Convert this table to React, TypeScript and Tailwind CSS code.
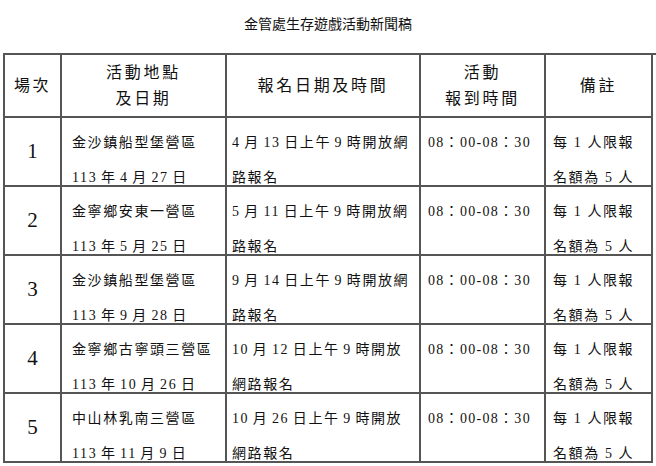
import React from 'react';

const rows = [
  {
    no: '1',
    place: ['金沙鎮船型堡營區', '113 年 4 月 27 日'],
    signup: ['4 月 13 日上午 9 時開放網', '路報名'],
  },
  {
    no: '2',
    place: ['金寧鄉安東一營區', '113 年 5 月 25 日'],
    signup: ['5 月 11 日上午 9 時開放網', '路報名'],
  },
  {
    no: '3',
    place: ['金沙鎮船型堡營區', '113 年 9 月 28 日'],
    signup: ['9 月 14 日上午 9 時開放網', '路報名'],
  },
  {
    no: '4',
    place: ['金寧鄉古寧頭三營區', '113 年 10 月 26 日'],
    signup: ['10 月 12 日上午 9 時開放', '網路報名'],
  },
  {
    no: '5',
    place: ['中山林乳南三營區', '113 年 11 月 9 日'],
    signup: ['10 月 26 日上午 9 時開放', '網路報名'],
  },
];

const serif = "font-['Liberation_Serif','Noto_Sans_CJK_TC',serif]";
const cell = 'border-r-2 border-b-2 border-[#555]';
const body = 'pt-[7px] text-[14px] leading-[35px] whitespace-nowrap';

const App = () => {
  return (
    <div className="w-[656px] h-[466px] bg-white overflow-hidden text-[#111]">
      <div className="pt-[14px] text-center text-[14px] leading-[18px] font-['Noto_Sans_CJK_TC',sans-serif]">
        金管處生存遊戲活動新聞稿
      </div>

      <div
        className={`ml-[3px] mt-[21px] grid grid-cols-[57px_165px_194px_125px_107px] grid-rows-[63px_repeat(5,69px)] border-l-2 border-t-2 border-[#555] ${serif}`}
      >
        {/* header */}
        <div className={`${cell} flex items-center justify-center text-[16px] tracking-[2.5px]`}>場次</div>
        <div className={`${cell} flex flex-col items-center justify-center text-[16px] leading-[26px] tracking-[2.7px]`}>
          <span>活動地點</span>
          <span>及日期</span>
        </div>
        <div className={`${cell} flex items-center justify-center text-[16px] tracking-[2.7px]`}>報名日期及時間</div>
        <div className={`${cell} flex flex-col items-center justify-center text-[16px] leading-[26px] tracking-[2.7px]`}>
          <span>活動</span>
          <span>報到時間</span>
        </div>
        <div className={`${cell} flex items-center justify-center text-[16px] tracking-[2.7px]`}>備註</div>

        {rows.map((r) => (
          <React.Fragment key={r.no}>
            <div className={`${cell} flex items-center justify-center text-[21px]`}>{r.no}</div>
            <div className={`${cell} ${body} pl-[10px] tracking-[1.6px] [word-spacing:-1.5px]`}>
              <div>{r.place[0]}</div>
              <div>{r.place[1]}</div>
            </div>
            <div className={`${cell} ${body} pl-[5px] tracking-[1.6px] [word-spacing:-1.5px]`}>
              <div>{r.signup[0]}</div>
              <div>{r.signup[1]}</div>
            </div>
            <div className={`${cell} ${body} pl-[7px] tracking-[1.3px]`}>08：00-08：30</div>
            <div className={`${cell} ${body} pl-[7px] tracking-[1.6px]`}>
              <div>每 1 人限報</div>
              <div>名額為 5 人</div>
            </div>
          </React.Fragment>
        ))}
      </div>
    </div>
  );
};

export default App;
